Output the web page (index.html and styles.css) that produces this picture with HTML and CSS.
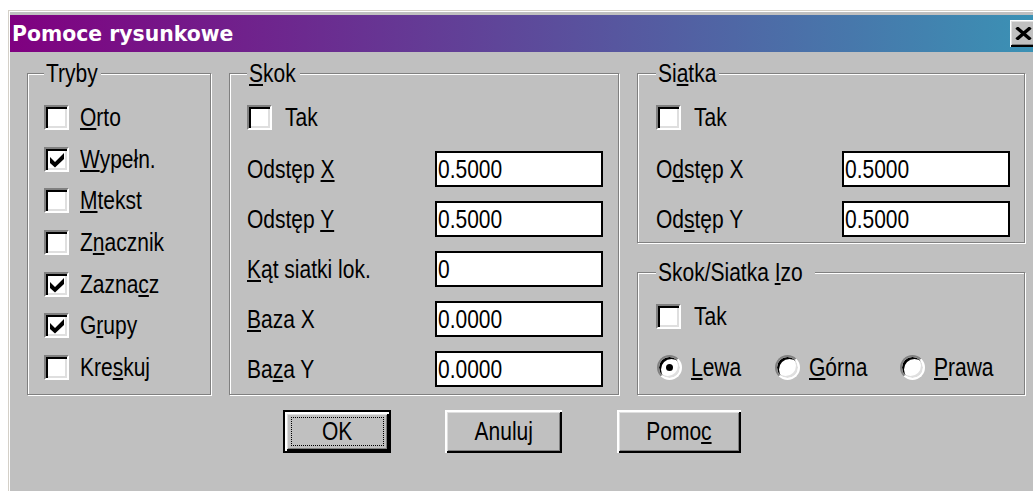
FILE: index.html
```html
<!DOCTYPE html>
<html lang="pl">
<head>
<meta charset="utf-8">
<title>Pomoce rysunkowe</title>
<link rel="stylesheet" href="styles.css">
</head>
<body>
<div class="dialog">
  <div class="titlebar">
    <span class="title">Pomoce rysunkowe</span>
    <span class="close-btn">
      <svg width="17" height="13" viewBox="0 0 17 13"><path d="M1.5 0.5 L15.5 12.5 M15.5 0.5 L1.5 12.5" stroke="#000" stroke-width="3.4" fill="none"/></svg>
    </span>
  </div>

  <div class="panes">
    <fieldset class="group modes">
      <legend class="lg-modes"><span class="text">Tryby</span></legend>
      <div class="rows">
        <div class="check"><span class="box"></span><span class="text"><u>O</u>rto</span></div>
        <div class="check"><span class="box on"><svg viewBox="0 0 7 7"><polygon points="0,2 2.5,4.5 7,0 7,3 2.5,7.2 0,5"/></svg></span><span class="text"><u>W</u>ypełn.</span></div>
        <div class="check"><span class="box"></span><span class="text"><u>M</u>tekst</span></div>
        <div class="check"><span class="box"></span><span class="text">Z<u>n</u>acznik</span></div>
        <div class="check"><span class="box on"><svg viewBox="0 0 7 7"><polygon points="0,2 2.5,4.5 7,0 7,3 2.5,7.2 0,5"/></svg></span><span class="text">Zazna<u>c</u>z</span></div>
        <div class="check"><span class="box on"><svg viewBox="0 0 7 7"><polygon points="0,2 2.5,4.5 7,0 7,3 2.5,7.2 0,5"/></svg></span><span class="text">G<u>r</u>upy</span></div>
        <div class="check"><span class="box"></span><span class="text">Kre<u>s</u>kuj</span></div>
      </div>
    </fieldset>

    <fieldset class="group snap">
      <legend class="lg-snap"><span class="text"><u>S</u>kok</span></legend>
      <div class="rows">
        <div class="check tak"><span class="box"></span><span class="text">Tak</span></div>
        <div class="field first"><span class="text">Odstęp <u>X</u></span><div class="edit"><span class="text">0.5000</span></div></div>
        <div class="field"><span class="text">Odstęp <u>Y</u></span><div class="edit"><span class="text">0.5000</span></div></div>
        <div class="field"><span class="text"><u>K</u>ąt siatki lok.</span><div class="edit"><span class="text">0</span></div></div>
        <div class="field"><span class="text"><u>B</u>aza X</span><div class="edit"><span class="text">0.0000</span></div></div>
        <div class="field"><span class="text">Ba<u>z</u>a Y</span><div class="edit"><span class="text">0.0000</span></div></div>
      </div>
    </fieldset>

    <div class="side">
      <fieldset class="group grid-set">
        <legend class="lg-grid"><span class="text">Si<u>a</u>tka</span></legend>
        <div class="rows">
          <div class="check tak"><span class="box"></span><span class="text">Tak</span></div>
          <div class="field first"><span class="text">O<u>d</u>stęp X</span><div class="edit"><span class="text">0.5000</span></div></div>
          <div class="field"><span class="text">Od<u>s</u>tęp Y</span><div class="edit"><span class="text">0.5000</span></div></div>
        </div>
      </fieldset>

      <fieldset class="group iso">
        <legend class="lg-iso"><span class="text">Skok/Siatka <u>I</u>zo</span></legend>
        <div class="rows">
          <div class="check tak"><span class="box"></span><span class="text">Tak</span></div>
          <div class="radios">
            <div class="radio"><span class="dot on"></span><span class="text"><u>L</u>ewa</span></div>
            <div class="radio"><span class="dot"></span><span class="text"><u>G</u>órna</span></div>
            <div class="radio"><span class="dot"></span><span class="text"><u>P</u>rawa</span></div>
          </div>
        </div>
      </fieldset>
    </div>
  </div>

  <div class="buttons">
    <div class="btn default ok"><span class="focus"><span class="text">OK</span></span></div>
    <div class="btn cancel"><span class="text">Anuluj</span></div>
    <div class="btn help"><span class="text">Pomo<u>c</u></span></div>
  </div>
</div>
</body>
</html>
```

FILE: styles.css
```css
html, body {
  margin: 0;
  background: #fff;
  overflow: hidden;
}

body {
  font-family: "Liberation Sans", Arial, sans-serif;
  font-size: 25px;
  color: #000;
}

u {
  text-decoration-thickness: 2px;
  text-underline-offset: 2px;
}

/* dialog text is drawn in a condensed face */
.text {
  display: inline-block;
  white-space: nowrap;
  line-height: 1;
  transform: scaleX(0.84);
  transform-origin: 0 50%;
}

/* window frame */
.dialog {
  margin: 10px 0 0 8px;
  width: 1040px;
  height: 481px;
  box-sizing: border-box;
  background: #c0c0c0;
  border-top: 1px solid #d4d0c8;
  border-left: 1px solid #d4d0c8;
  padding: 4px 0 0 1px;
  box-shadow: inset 1px 1px 0 #fff;
}

/* caption */
.titlebar {
  display: flex;
  align-items: center;
  justify-content: space-between;
  width: 1034px;
  height: 37px;
  background: linear-gradient(to right, #800080, #3a93b5);
}

.title {
  font-family: "DejaVu Sans", sans-serif;
  font-weight: bold;
  font-size: 20.4px;
  color: #fff;
  padding-left: 2px;
}

.close-btn {
  display: flex;
  align-items: center;
  width: 32px;
  height: 27px;
  margin-right: 2px;
  padding-left: 5px;
  box-sizing: border-box;
  background: #c0c0c0;
  box-shadow: inset 1px 1px 0 #fff, inset -2px -2px 0 #000, inset 2px 2px 0 #dfdfdf, inset -3px -3px 0 #808080;
}

.close-btn svg {
  display: block;
}

/* group boxes */
.panes {
  display: grid;
  grid-template-columns: 184px 390px 388px;
  column-gap: 18px;
  margin: 9px 0 0 17px;
}

.group {
  margin: 0;
  min-width: 0;
  box-sizing: border-box;
  border: 1px solid #808080;
  box-shadow: 1px 1px 0 #fff, inset 1px 1px 0 #fff;
  padding: 20px 15px 0 17px;
}

.group legend {
  box-sizing: border-box;
  height: 24px;
  padding: 0 3px 0 2px;
  line-height: 24px;
  background: #c0c0c0;
}

.group legend .text {
  line-height: 24px;
  vertical-align: top;
}

.lg-modes { width: 57px; }
.lg-snap  { width: 53px; }
.lg-grid  { width: 63px; }
.lg-iso   { width: 159px; }

.modes {
  padding-left: 16px;
}

.grid-set,
.iso {
  padding-left: 18px;
  padding-right: 14px;
}

.grid-set {
  padding-bottom: 5px;
}

.iso {
  padding-bottom: 14px;
}

.side {
  display: flex;
  flex-direction: column;
  gap: 17px;
}

.rows {
  display: flex;
  flex-direction: column;
}

.modes .rows {
  gap: 16.67px;
}

/* checkbox */
.check {
  display: flex;
  align-items: center;
  gap: 11px;
  height: 25px;
}

.check.tak {
  gap: 13px;
}

.box {
  flex: none;
  display: flex;
  align-items: center;
  justify-content: center;
  width: 25px;
  height: 25px;
  box-sizing: border-box;
  border: 2px solid;
  border-color: #808080 #fff #fff #808080;
  box-shadow: inset 2px 2px 0 #000, inset -2px -2px 0 #dfdfdf;
  background: #fff;
}

.box svg {
  width: 14px;
  height: 14px;
  margin: 1px 0 0 1px;
  fill: #000;
  overflow: visible;
}

/* label + edit box rows */
.field {
  display: flex;
  align-items: center;
  justify-content: space-between;
  height: 36px;
  margin-top: 14px;
}

.field.first {
  margin-top: 21px;
}

.edit {
  display: flex;
  align-items: center;
  width: 168px;
  height: 36px;
  box-sizing: border-box;
  padding-left: 1px;
  border: 2px solid #000;
  background: #fff;
}

/* radio buttons */
.radios {
  display: grid;
  grid-template-columns: 118px 125px auto;
  align-items: center;
  margin-top: 26px;
  padding-left: 1px;
}

.radio {
  display: flex;
  align-items: center;
  gap: 9px;
}

.dot {
  flex: none;
  display: flex;
  align-items: center;
  justify-content: center;
  width: 25px;
  height: 25px;
  box-sizing: border-box;
  border-radius: 50%;
  border: 2px solid;
  border-color: #808080 #fff #fff #808080;
  box-shadow: inset 2px 2px 0 #000, inset -2px -2px 0 #dfdfdf;
  background: #fff;
}

.dot.on::after {
  content: "";
  width: 7px;
  height: 7px;
  border-radius: 50%;
  background: #000;
}

/* push buttons */
.buttons {
  display: flex;
  gap: 54px;
  margin: 15px 0 0 273px;
}

.btn {
  display: flex;
  align-items: center;
  justify-content: center;
  height: 43px;
  box-sizing: border-box;
  background: #c0c0c0;
  box-shadow: inset 2px 2px 0 #fff, inset -2px -2px 0 #000, inset 3px 3px 0 #dfdfdf, inset -3px -3px 0 #808080;
}

.btn .text {
  transform-origin: 50% 50%;
}

.btn.default {
  border: 2px solid #000;
}

.ok {
  width: 108px;
}

.cancel {
  width: 117px;
}

.help {
  width: 124px;
  margin-left: 1px;
}

.focus {
  display: flex;
  align-items: center;
  justify-content: center;
  width: 93px;
  height: 29px;
  box-sizing: border-box;
  border: 1px dotted #000;
}
```
